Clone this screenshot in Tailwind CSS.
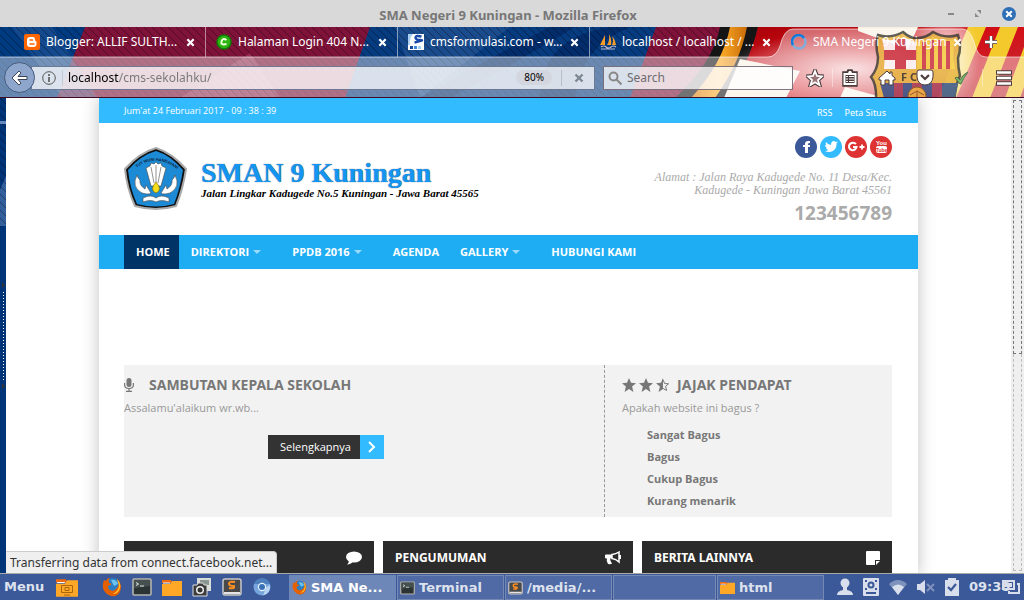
<!DOCTYPE html>
<html lang="id">
<head>
    <meta charset="UTF-8">
    <meta name="viewport" content="width=device-width, initial-scale=1.0">
    <title>SMA Negeri 9 Kuningan - Mozilla Firefox</title>
    <script src="https://cdn.jsdelivr.net/npm/@tailwindcss/browser@4"></script>
</head>
<body class="flex h-screen flex-col overflow-hidden bg-[#003478] font-['Noto_Sans',sans-serif]">

    <!-- Shared icons -->
    <svg class="hidden">
        <symbol id="x" viewBox="0 0 10 10"><path d="M1.5 1.5l7 7m0-7l-7 7" fill="none" stroke="currentColor" stroke-width="2.4"/></symbol>
        <symbol id="firefox" viewBox="0 0 20 20">
            <circle cx="10.5" cy="9" r="8" fill="#2c7ec4"/>
            <path d="M9 3q5-1 7 4l-4 2z" fill="#6ec3ee"/>
            <path d="M2 3q-3 8 1 12 4 5 10 4 6-2 6-10-1-5-4-7 3 6 0 9-3 4-7 2-2-1-2-4l3-1q1-2-2-2-1-3 1-5-3 0-4 3z" fill="#e66000"/>
            <path d="M15 2q4 4 3 9-2 6-7 6 6-3 6-9z" fill="#ffcb2d"/>
        </symbol>
        <symbol id="terminal" viewBox="0 0 20 18">
            <rect x="1" y="1" width="18" height="16" rx="1" fill="#2c3333" stroke="#b4b4ad" stroke-width="1.600"/>
            <path d="M2 2h16v6L2 10z" fill="#465050"/>
            <path d="M4 4.500l2.500 1.500L4 7.500M8 8h4" fill="none" stroke="#dfe8df"/>
        </symbol>
        <symbol id="folder" viewBox="0 0 20 17">
            <path d="M0 1h9l1 3H0z" fill="#ee6a10"/>
            <path d="M0 5h8l2-3h10v15H0z" fill="#ffa726"/>
            <path d="M1 4h7" stroke="#fff" stroke-width="1"/>
        </symbol>
        <symbol id="sublime" viewBox="0 0 20 18">
            <rect x="1" y="1" width="18" height="16" rx="2" fill="#494949" stroke="#c9c9c9" stroke-width="1.5"/>
            <path d="M2 14h16v2H2z" fill="#e5e5e5"/>
            <path d="M13 4q-6-1-6 1.500t5 2.500q1 3-5 2" fill="none" stroke="#ff9022" stroke-width="2"/>
        </symbol>
        <symbol id="star" viewBox="0 0 14 14"><path d="M7 0l2 4.800 5 .4-3.900 3.300L11.400 14 7 11l-4.400 3 1.300-5.500L0 5.200l5-.4z" fill="currentColor"/></symbol>
    </svg>

    <!-- Window title -->
    <header class="flex h-[27px] shrink-0 items-center bg-[#d9d9d9] pr-2">
        <div class="w-20"></div>
        <h1 class="flex-1 pt-1 text-center text-[13px] font-bold text-[#777]">SMA Negeri 9 Kuningan - Mozilla Firefox</h1>
        <div class="flex w-20 items-center justify-end gap-5 text-[#888]">
            <button aria-label="Minimize" class="h-[2px] w-[6px] bg-[#888]"></button>
            <button aria-label="Maximize"><svg class="h-2 w-2" viewBox="0 0 8 8"><path d="M3 0h4v4zM1 3v4h4z" fill="#888"/></svg></button>
            <button aria-label="Close" class="flex h-[14px] w-[14px] items-center justify-center rounded-full bg-[#2f6fb5] text-white"><svg class="h-2 w-2"><use href="#x"/></svg></button>
        </div>
    </header>

    <!-- Tabs and toolbar on the FCB theme -->
    <section class="relative h-[71px] shrink-0 overflow-hidden">
        <svg class="absolute inset-0 h-full w-full" viewBox="0 0 1024 71" preserveAspectRatio="xMaxYMin slice">
            <defs>
                <pattern id="hatch" width="8" height="8" patternUnits="userSpaceOnUse"><path d="M-1-1l10 10" stroke="#000" stroke-opacity=".35"/></pattern>
                <linearGradient id="red" x2="1" y2="1"><stop offset="0" stop-color="#a80008"/><stop offset=".5" stop-color="#d30f18"/><stop offset="1" stop-color="#c2343a"/></linearGradient>
                <linearGradient id="gold" x2="1"><stop offset="0" stop-color="#d77a10"/><stop offset=".5" stop-color="#ffae2a"/><stop offset="1" stop-color="#c96c08"/></linearGradient>
                <radialGradient id="glow"><stop offset="0" stop-color="#fff" stop-opacity=".8"/><stop offset="1" stop-color="#fff" stop-opacity="0"/></radialGradient>
            </defs>
            <path d="M0 0h1024v71H0z" fill="#7f1238"/>
            <path d="M0 0h85L57 71H0z" fill="#003a80"/>
            <path d="M12 0h40l45 71H62z" fill="#33639f" opacity=".4"/>
            <path d="M370 0h286l-26 71H345z" fill="#063b80"/>
            <path d="M395 0h115l-90 71z" fill="#4a70a8" opacity=".3"/>
            <path d="M420 71Q490 30 550 0h25Q500 45 450 71zM540 71q0-60 70-71h20q-50 20-55 71z" fill="#001d55" opacity=".5"/>
            <path d="M180 71l70-45 30 45z" fill="#c06080" opacity=".35"/>
            <path d="M0 0h730v71H0z" fill="url(#hatch)"/>
            <path d="M720 0h38q-8 36-34 71h-49q38-35 45-71z" fill="#151515"/>
            <path d="M730 0h17q-7 36-32 71h-24q32-35 39-71z" fill="url(#gold)"/>
            <path d="M758 0h266v71H724q26-35 34-71z" fill="url(#red)"/>
            <path d="M740 32l60 12-14 27h-62zM858 0h60l-10 22-50-18zM845 60l40 11h-45z" fill="#f8efe0"/>
            <path d="M968 0h18l-30 71h-18zM1000 0h18l-28 71h-18zM1024 20v40l-4 11h-15z" fill="#f4c92c"/>
            <ellipse cx="850" cy="42" rx="125" ry="38" fill="url(#glow)"/>
            <ellipse cx="945" cy="30" rx="35" ry="50" fill="url(#glow)"/>
            <!-- Light toolbar with the selected tab rising out of it -->
            <path d="M0 30H768Q776 30 780 19 784 2 793 2H962Q970 2 974 15 977 30 986 30H1024V71H0z" fill="#fff" fill-opacity=".4"/>
            <path d="M0 30H768Q776 30 780 19 784 2 793 2H962Q970 2 974 15 977 30 986 30H1024" fill="none" stroke="#fff" stroke-opacity=".6"/>
            <!-- Club crest -->
            <g opacity=".8">
                <path d="M878 8q12 4 25-3 8 7 14 6 9 0 16-6 12 7 25 3 4 12 0 23 0 10 2 18-4 6-6 26h-78q1-18-5-25 7-8 7-20-3-12 0-22z" fill="#e8b339" stroke="#38372e" stroke-width="2.500"/>
                <path d="M882 12q12 3 22-2 6 4 12 5v27h-32q2-18-2-30z" fill="#fff"/>
                <path d="M917 15q10 0 16-5 12 5 22 2-3 16 0 30h-38z" fill="#f6cf37"/>
                <path d="M895 12h11v30h-11zM884 23h32v10h-32zM922 15h4v27h-4zM930 13h4v29h-4zM938 13h4v29h-4zM946 14h4v28h-4z" fill="#c92f3d"/>
                <path d="M880 56h78l-3 15h-71z" fill="#294b85"/>
                <path d="M894 56h9v15h-9zM912 56h10v15h-10zM932 56h10v15h-10z" fill="#a33350"/>
                <circle cx="917" cy="69" r="9" fill="#edaa34" stroke="#7c5110"/>
                <path d="M910 68l7-4 7 4M917 64v7" fill="none" stroke="#7c5110"/>
                <text x="901" y="54" font-family="Noto Sans" font-size="11" font-weight="700" fill="#2e2a1c">F C B</text>
            </g>
            <path d="M0 70.500h1024" stroke="#400a22"/>
        </svg>
        <div class="relative flex h-[30px] pl-4 text-xs text-white [text-shadow:1px_1px_1px_#000]">
            <div class="flex min-w-0 flex-1 items-center border-r border-white/50 bg-clip-padding pr-[10px] pl-2">
                <svg class="h-4 w-4 shrink-0" viewBox="0 0 16 16"><rect width="16" height="16" rx="2" fill="#ff6600"/><path d="M6 3h3q2 0 2 3 0 1 1.500 1.500V10q0 3-3 3H6q-3 0-3-3V6q0-3 3-3z" fill="#fff"/><path d="M6 6h2.500M6 10h4" stroke="#ff6600" stroke-width="1.500" stroke-linecap="round"/></svg>
                <button class="ml-[6px] flex-1 truncate text-left">Blogger: ALLIF SULTH...</button>
                <button aria-label="Close tab"><svg class="h-[9px] w-[9px]"><use href="#x"/></svg></button>
            </div>
            <div class="flex min-w-0 flex-1 items-center border-r border-white/50 pr-[10px] pl-[10px]">
                <svg class="h-4 w-4 shrink-0" viewBox="0 0 16 16"><circle cx="8" cy="8" r="7" fill="#2eb514" stroke="#117a05" stroke-width="1.500"/><path d="M10.500 6q-4-2.500-5 1.500T10.500 10" fill="none" stroke="#e9ffd8" stroke-width="2"/></svg>
                <button class="ml-[6px] flex-1 truncate text-left">Halaman Login 404 N...</button>
                <button aria-label="Close tab"><svg class="h-[9px] w-[9px]"><use href="#x"/></svg></button>
            </div>
            <div class="flex min-w-0 flex-1 items-center border-r border-white/50 pr-[10px] pl-[10px]">
                <svg class="h-4 w-4 shrink-0" viewBox="0 0 16 16"><path d="M0 0h16v16H0z" fill="#fff"/><path d="M0 0h5Q1 5 2 11H0z" fill="#aacdf2"/><path d="M13.500 2.500q-6-1.500-6 1t5 2.500-6 2.500" fill="none" stroke="#1949a8" stroke-width="2.400"/><path d="M2 12h3v3H2z" fill="#1a489f"/><path d="M6 12h3v3H6z" fill="#3e8be0"/><path d="M10 12h3v3h-3z" fill="#a2d1fa"/></svg>
                <button class="ml-[6px] flex-1 truncate text-left">cmsformulasi.com - w...</button>
                <button aria-label="Close tab"><svg class="h-[9px] w-[9px]"><use href="#x"/></svg></button>
            </div>
            <div class="flex min-w-0 flex-1 items-center pr-[10px] pl-[10px]">
                <svg class="h-4 w-4 shrink-0" viewBox="0 0 16 16"><path d="M5 1L0 11h5zM9 0q1 7-2 11h4q1-6-2-11zM12 2q2 5 0 9h4q-1-6-4-9z" fill="#f89c27"/><path d="M1 13q3-2 5 0t5 0 5 0M1 15h14" fill="none" stroke="#b9b5c8" stroke-width="1.200"/></svg>
                <button class="ml-[6px] flex-1 truncate text-left">localhost / localhost / ...</button>
                <button aria-label="Close tab"><svg class="h-[9px] w-[9px]"><use href="#x"/></svg></button>
            </div>
            <div class="flex min-w-0 flex-1 items-center pr-[10px] pl-[10px]">
                <svg class="h-4 w-4 shrink-0" viewBox="0 0 16 16" fill="none" stroke-width="2.400"><circle cx="8" cy="8" r="6.500" stroke="#7faddc"/><path d="M2 11A6.500 6.500 0 0 1 13 4" stroke="#1279d8"/></svg>
                <button class="ml-[6px] flex-1 truncate text-left">SMA Negeri 9 Kuningan</button>
                <button aria-label="Close tab"><svg class="h-[9px] w-[9px]"><use href="#x"/></svg></button>
            </div>
            <button aria-label="New tab" class="flex w-[52px] items-center pl-3"><svg class="h-[14px] w-[14px]" viewBox="0 0 14 14"><path d="M7 1v12M1 7h12" stroke="#4b3030" stroke-width="4"/><path d="M7 1v12M1 7h12" stroke="#fff" stroke-width="2.400"/></svg></button>
        </div>
        <div class="relative flex h-[41px] items-center pr-[11px] pl-1">
            <button aria-label="Back" class="z-10 flex h-[31px] w-[31px] shrink-0 items-center justify-center rounded-full border border-[#465a7e] bg-[#8ea6cb]">
                <svg class="h-4 w-[17px]" viewBox="0 0 17 16"><path d="M8 1L1 8l7 7 2-2-3-3.500h9v-3H7L10 3z" fill="#fff" stroke="#3b4453" stroke-linejoin="round"/></svg>
            </button>
            <div class="-ml-1 flex h-6 flex-1 items-center border border-[#4f5f80]/80 bg-white/75 pr-[10px] pl-[10px]">
                <svg class="h-[14px] w-[14px] shrink-0" viewBox="0 0 14 14" fill="none" stroke="#555"><circle cx="7" cy="7" r="6.300"/><path d="M7 6v5M7 3v2" stroke-width="1.600"/></svg>
                <span class="ml-[6px] h-4 w-px bg-black/10"></span>
                <input aria-label="Address" value="localhost/cms-sekolahku/" class="ml-[5px] h-5 min-w-0 flex-1 bg-[linear-gradient(90deg,#000_51px,#777_51px)] bg-clip-text text-xs text-transparent outline-none">
                <button class="h-[15px] rounded-full bg-[#d3d6df] px-2 text-[10px] leading-[15px]">80%</button>
                <span class="ml-[9px] h-4 w-px bg-black/15"></span>
                <button aria-label="Stop" class="ml-3 text-[#7d8794]"><svg class="h-[10px] w-[10px]"><use href="#x"/></svg></button>
            </div>
            <label class="ml-2 flex h-6 w-[190px] items-center border border-[#5f5462]/80 bg-white/75 pl-1">
                <svg class="h-[14px] w-[14px]" viewBox="0 0 14 14" fill="none" stroke="#888" stroke-width="2"><circle cx="5.500" cy="5.500" r="4"/><path d="M8.500 8.500l5 5"/></svg>
                <input aria-label="Search" placeholder="Search" class="ml-[5px] w-36 text-xs outline-none placeholder:text-[#6c6c70]">
            </label>
            <div class="ml-[13px] flex w-[207px] items-center justify-between">
                <button aria-label="Bookmark"><svg class="h-[18px] w-[18px]" viewBox="0 0 18 18"><path d="M9 2l2 5 5 .4-4 3.600 1.400 5L9 13.200 4.600 16 6 11 2 7.400 7 7z" fill="none" stroke="#4d3c3c" stroke-width="4"/><path d="M9 2l2 5 5 .4-4 3.600 1.400 5L9 13.200 4.600 16 6 11 2 7.400 7 7z" fill="#9b7478" stroke="#fff" stroke-width="1.800"/></svg></button>
                <span class="h-[18px] w-px bg-white/40"></span>
                <button aria-label="Bookmarks list"><svg class="h-[18px] w-4" viewBox="0 0 16 18"><path d="M1 3h4l1-2h4l1 2h4v14H1z" fill="#4d3c3c" stroke="#4d3c3c" stroke-width="1.500"/><path d="M1.500 4H6l1-2h2l1 2h4.500v12h-13z" fill="#fff"/><path d="M3.500 6h9v8h-9z" fill="#4d3c3c"/><path d="M4 7.500h2m1 0h5M4 10h2m1 0h5m-8 2.500h2m1 0h5" stroke="#fff"/></svg></button>
                <button aria-label="Home" class="ml-3"><svg class="h-4 w-[18px]" viewBox="0 0 18 16"><path d="M9 1L1 8v2h2v5h4v-5h4v5h4v-5h2V8l-3-2.500V2h-2v2z" fill="#fff" stroke="#4d3c3c"/></svg></button>
                <button aria-label="Pocket" class="ml-3"><svg class="h-[17px] w-[18px]" viewBox="0 0 18 17"><path d="M1 3q0-2 2-2h12q2 0 2 2v5q-1 8-8 8T1 8z" fill="#fff" stroke="#4d3c3c"/><path d="M5 6l4 4 4-4" fill="none" stroke="#4d3c3c" stroke-width="2.200"/></svg></button>
                <button aria-label="Checked" class="ml-3"><svg class="h-[14px] w-[15px]" viewBox="0 0 15 14"><path d="M1 7l2-1 3 3q3-6 8-8-4 5-7 12H6z" fill="#75b56c" stroke="#55714e"/></svg></button>
                <span class="ml-1 h-[18px] w-px bg-white/40"></span>
                <button aria-label="Menu" class="ml-1"><svg class="h-4 w-[18px]" viewBox="0 0 18 16"><path d="M1 2.500h16M1 8h16M1 13.500h16" stroke="#4d3c3c" stroke-width="4.400"/><path d="M2 2.500h14M2 8h14M2 13.500h14" stroke="#fff" stroke-width="2.600"/></svg></button>
            </div>
        </div>
    </section>

    <main class="relative flex min-h-0 flex-1 overflow-hidden">
        <!-- Collapsed sidebar edge -->
        <div class="flex w-[6px] shrink-0 flex-col items-end">
            <svg class="h-full w-[6px]" viewBox="0 0 6 475" preserveAspectRatio="xMinYMin slice"><path d="M0 0h6v475H0z" fill="#003478"/><path d="M0 92l6-14v50H0z" fill="#33609c"/><path d="M0 0h6v129H0z" fill="url(#hatch)"/><path d="M0 23h6v3H0z" fill="#6689bb"/><path d="M2 184l3 3-3 3zM2 285l3 3-3 3z" fill="#333"/><path d="M3.500 194v90" stroke="#fff" stroke-dasharray="1 2"/></svg>
        </div>

        <!-- Web page -->
        <div class="min-w-0 flex-1 overflow-hidden bg-white font-['Open_Sans','Noto_Sans',sans-serif]">
            <div class="mx-auto min-h-full max-w-[819px] bg-white shadow-[0_0_16px_rgba(0,0,0,0.25)]">
                <div class="flex h-[25px] items-center justify-between bg-[#33bbff] pr-8 pl-[25px] text-[9px] text-white">
                    <span>Jum'at 24 Februari 2017 - 09 : 38 : 39</span>
                    <nav class="flex gap-3 pt-1 font-['Noto_Sans',sans-serif]"><a href="#">RSS</a><a href="#">Peta Situs</a></nav>
                </div>
                <div class="flex h-28 justify-between pr-[26px] pl-[25px]">
                    <a href="#" class="flex items-center gap-[14px]">
                        <svg class="h-16 w-[63px]" viewBox="0 0 63 64">
                            <path d="M32 1Q48 6 62 22 59 42 52 59 32 65 11 59 3 42 1 22 15 6 32 1z" fill="#111" stroke="#aaa" stroke-width="2"/>
                            <path d="M32 4Q46 8 59 23 56 42 50 57 32 62 13 57 6 42 4 23 17 8 32 4z" fill="#1d8ad6"/>
                            <path id="motto" d="M8 25Q31 2 58 26" fill="none"/>
                            <text font-family="Liberation Sans" font-size="4" font-weight="700" fill="#0b1c33"><textPath href="#motto" startOffset="50%" text-anchor="middle">TUT WURI HANDAYANI</textPath></text>
                            <g fill="#fff" stroke="#444" stroke-width=".6">
                                <path d="M22 21l4-2 1-3 3 1 2-2 2 2 3-1 1 3 4 2-5 18h-10z"/>
                                <path d="M13 28q-6 12 5 18 7 2 9 0l-5-8-1 4q-6-4-5-9-2-1-3-5zM51 28q6 12-5 18-7 2-9 0l5-8 1 4q6-4 5-9 2-1 3-5z"/>
                                <path d="M19 51q8-4 13 0 5-4 13 0v4q-8-3-13 0-5-3-13 0z"/>
                            </g>
                            <path d="M27 20l3 16M32 18v17M37 20l-3 16" stroke="#777" stroke-width=".8"/>
                            <path d="M32 35q7 8 0 11-7-3 0-11z" fill="#f7dc19" stroke="#776100" stroke-width=".6"/>
                        </svg>
                        <span class="font-['Liberation_Serif',serif]">
                            <strong class="block text-[28px] leading-7 text-[#1595f2] [text-shadow:0_0_1px_#345]">SMAN 9 Kuningan</strong>
                            <strong class="block text-[11px] leading-3 text-black italic">Jalan Lingkar Kadugede No.5 Kuningan - Jawa Barat 45565</strong>
                        </span>
                    </a>
                    <div class="flex flex-col items-end pt-[13px] text-right text-[#aaa]">
                        <div class="flex gap-[3px]">
                            <a href="#" aria-label="Facebook"><svg class="h-[22px] w-[22px]" viewBox="0 0 22 22"><circle cx="11" cy="11" r="11" fill="#3b5998"/><path d="M15 5h-2q-3 0-3 3v1H8v2h2v6h3v-6h2V9h-2V8q0-1 2-1z" fill="#fff"/></svg></a>
                            <a href="#" aria-label="Twitter"><svg class="h-[22px] w-[22px]" viewBox="0 0 22 22"><circle cx="11" cy="11" r="11" fill="#33bbff"/><path d="M6 6q2 3 5 3 0-4 3-4l2 1 2-.5-1.500 2Q17 13 12 15.500q-4 1-7-.5 2 0 3.500-1-2-.5-2.500-2h1Q5 11 5 9l1.500.5Q5 8 6 6z" fill="#fff"/></svg></a>
                            <a href="#" aria-label="Google Plus"><svg class="h-[22px] w-[22px]" viewBox="0 0 22 22"><circle cx="11" cy="11" r="11" fill="#dd3333"/><path d="M11 8Q9 6 6.500 7 4 8 4 10.500T6.500 14q4 1 5-3H8" fill="none" stroke="#fff" stroke-width="2"/><path d="M17 8.500v5M14.500 11h5" stroke="#fff" stroke-width="1.800"/></svg></a>
                            <a href="#" aria-label="YouTube"><svg class="h-[22px] w-[22px]" viewBox="0 0 22 22"><circle cx="11" cy="11" r="11" fill="#dd3333"/><rect x="6" y="10" width="11" height="7" rx="2" fill="#fff"/><text x="11.500" y="9" text-anchor="middle" font-family="Liberation Sans Narrow,Liberation Sans" font-size="6" font-weight="700" fill="#fff">You</text><text x="11.500" y="16" text-anchor="middle" font-family="Liberation Sans Narrow,Liberation Sans" font-size="5" font-weight="700" fill="#dd3333">Tube</text></svg></a>
                        </div>
                        <address class="mt-[13px] font-[Georgia,'Liberation_Serif',serif] text-xs leading-[13px]">Alamat : Jalan Raya Kadugede No. 11 Desa/Kec.<br>Kadugede - Kuningan Jawa Barat 45561</address>
                        <strong class="mt-1 text-[19px] leading-6">123456789</strong>
                    </div>
                </div>
                <nav class="flex h-[34px] bg-[#1eadf3] pl-[25px] text-[11px] leading-[34px] font-bold text-white">
                    <a href="#" class="bg-[#003366] pr-[9px] pl-3">HOME</a>
                    <a href="#" class="flex items-center gap-1 pr-[19px] pl-3">DIREKTORI <svg class="h-1 w-2" viewBox="0 0 8 4"><path d="M0 0h8L4 4z" fill="#99d9fb"/></svg></a>
                    <a href="#" class="flex items-center gap-1 pr-[19px] pl-3">PPDB 2016 <svg class="h-1 w-2" viewBox="0 0 8 4"><path d="M0 0h8L4 4z" fill="#99d9fb"/></svg></a>
                    <a href="#" class="pr-[9px] pl-3">AGENDA</a>
                    <a href="#" class="flex items-center gap-1 pr-[19px] pl-3">GALLERY <svg class="h-1 w-2" viewBox="0 0 8 4"><path d="M0 0h8L4 4z" fill="#99d9fb"/></svg></a>
                    <a href="#" class="pr-[9px] pl-3">HUBUNGI KAMI</a>
                </nav>

                <div class="pt-24 pr-[26px] pl-[25px]">
                    <div class="flex h-[152px] bg-[#f2f2f2] text-[#777]">
                        <section class="flex-1 pt-[10px]">
                            <h2 class="flex items-center font-['Noto_Sans',sans-serif] text-sm leading-5 font-bold">
                                <svg class="mr-[15px] h-[14px] w-[10px]" viewBox="0 0 10 14"><rect x="2.500" width="5" height="9" rx="2.500" fill="currentColor"/><path d="M.6 5v2q0 3.500 4.400 3.500T9.400 7V5M5 10v3M2 13.400h6" fill="none" stroke="currentColor" stroke-width="1.200"/></svg>
                                SAMBUTAN KEPALA SEKOLAH
                            </h2>
                            <p class="mt-1 text-[11px] leading-[18px] text-[#999]">Assalamu'alaikum wr.wb...</p>
                            <a href="#" class="mt-[18px] ml-36 inline-flex h-6 items-center bg-[#333] pl-3 text-[11px] text-white">Selengkapnya
                                <span class="ml-[9px] flex h-6 w-6 items-center justify-center bg-[#33bbff]"><svg class="h-3 w-2" viewBox="0 0 8 12"><path d="M1 1l5 5-5 5" fill="none" stroke="#fff" stroke-width="2"/></svg></span>
                            </a>
                        </section>
                        <section class="w-[288px] border-l border-dashed border-[#999] pt-[10px] pl-[17px]">
                            <h2 class="flex items-center gap-[3px] font-['Noto_Sans',sans-serif] text-sm leading-5 font-bold">
                                <svg class="h-[14px] w-[14px]"><use href="#star"/></svg>
                                <svg class="h-[14px] w-[14px]"><use href="#star"/></svg>
                                <svg class="mr-1 h-[14px] w-[14px]" viewBox="0 0 14 14"><path d="M7 0v11l-4.400 3 1.300-5.500L0 5.200l5-.4z" fill="currentColor"/><path d="M7 1.500l1.600 4 4 .3-3 2.500 1 4.200L7 10.400" fill="none" stroke="currentColor"/></svg>
                                JAJAK PENDAPAT
                            </h2>
                            <p class="mt-1 text-[11px] leading-[18px] text-[#999]">Apakah website ini bagus ?</p>
                            <ul class="mt-[7px] ml-[25px] text-[11px] leading-[22px] font-bold">
                                <li>Sangat Bagus</li>
                                <li>Bagus</li>
                                <li>Cukup Bagus</li>
                                <li>Kurang menarik</li>
                            </ul>
                        </section>
                    </div>
                    <div class="mt-6 grid grid-cols-3 gap-[9px] font-['Noto_Sans',sans-serif] text-xs font-bold text-white">
                        <h3 class="flex h-[34px] items-center justify-end bg-[#2b2b2b] px-3">
                            <svg class="h-[14px] w-4" viewBox="0 0 16 14"><ellipse cx="8" cy="6" rx="8" ry="5.500" fill="#fff"/><path d="M3 9q0 3-2 4.500 4 0 6-3z" fill="#fff"/></svg>
                        </h3>
                        <h3 class="flex h-[34px] items-center justify-between bg-[#2b2b2b] px-3">PENGUMUMAN
                            <svg class="h-[14px] w-4" viewBox="0 0 16 14" fill="#fff"><path d="M0 4.500q0-1 1-1h6v4H1q-1 0-1-1zM2 7h3q0 3 2 5.500-1 1-4 .5Q1 10 2 7z"/><path d="M7 3.500Q11 3 14 1v10Q11 8 7 7.500z" fill="none" stroke="#fff" stroke-width="1.500"/><path d="M14 4h2v4h-2z"/></svg>
                        </h3>
                        <h3 class="flex h-[34px] items-center justify-between bg-[#2b2b2b] px-3">BERITA LAINNYA
                            <svg class="h-[14px] w-[14px]" viewBox="0 0 14 14" fill="#fff"><path d="M0 1q0-1 1-1h12q1 0 1 1v8H9v5H1q-1 0-1-1z"/><path d="M10 10h4l-4 4z"/></svg>
                        </h3>
                    </div>
                </div>
            </div>
        </div>

        <!-- Scrollbar -->
        <div class="flex w-[13px] shrink-0 flex-col bg-[#efefef] px-[2px] py-[2px]">
            <div class="flex-[254] border border-dashed border-[#777]"></div>
            <div class="flex-[217] border border-t-0 border-dashed border-[#bbb]"></div>
        </div>

        <div class="absolute bottom-0 left-[6px] h-[22px] rounded-tr border border-b-0 border-l-0 border-[#ccc] bg-[#efefef] px-1 text-xs leading-[22px] text-[#333]">Transferring data from connect.facebook.net...</div>
    </main>

    <!-- Desktop panel -->
    <footer class="flex h-[27px] shrink-0 items-center border-t border-[#aaa] bg-[#3b5998] pl-1 font-['DejaVu_Sans',sans-serif] text-[13px] font-bold text-[#dde2ee]">
        <button class="w-[52px] text-left">Menu</button>
        <button aria-label="Show files" class="relative mr-6"><svg class="h-[19px] w-[22px]"><use href="#folder"/></svg><svg class="absolute top-[6px] left-[5px] h-3 w-3" viewBox="0 0 12 12" fill="none" stroke="#a8660f"><path d="M.5 1.500h11v7H.5zM3 11h6M4 3.500h4v3H4z"/></svg></button>
        <div class="flex items-center gap-[10px]">
            <button aria-label="Firefox" class="flex"><svg class="h-5 w-5"><use href="#firefox"/></svg></button>
            <button aria-label="Terminal" class="flex"><svg class="h-[18px] w-5"><use href="#terminal"/></svg></button>
            <button aria-label="Files" class="flex"><svg class="h-[17px] w-5"><use href="#folder"/></svg></button>
            <button aria-label="Screenshot" class="flex"><svg class="h-5 w-5" viewBox="0 0 20 20"><path d="M5 1h14v13H5z" fill="#d9ddd9"/><path d="M8 3h9v5H8z" fill="#889591"/><path d="M1 8h4l1-2h5l1 2h3v11H1z" fill="#3b3b3b" stroke="#ddd"/><circle cx="8" cy="13" r="4" fill="#eee"/><circle cx="8" cy="13" r="2.500" fill="#333"/></svg></button>
            <button aria-label="Sublime Text" class="flex"><svg class="h-[18px] w-5"><use href="#sublime"/></svg></button>
            <button aria-label="Chromium" class="flex"><svg class="h-5 w-5" viewBox="0 0 20 20"><circle cx="10" cy="10" r="8.500" fill="#75a5dc"/><path d="M2 7q3-6 9-5.500 5 .5 7 5.500h-8z" fill="#4c7fbe"/><path d="M18 8q1 8-7 10.500l3-8z" fill="#b9d5f3"/><circle cx="10" cy="10" r="4.200" fill="#e9f2fc"/><circle cx="10" cy="10" r="3" fill="#3971b5"/></svg></button>
        </div>
        <div class="ml-[17px] flex h-full min-w-0 flex-1 gap-px pt-px">
            <button class="flex min-w-0 flex-1 items-center gap-1 bg-[#6c87b8] px-[3px] text-white"><svg class="h-[15px] w-[15px] shrink-0"><use href="#firefox"/></svg><span class="whitespace-nowrap">SMA Ne...</span></button>
            <button class="flex min-w-0 flex-1 items-center gap-1 border border-[#7689b3] bg-[#4f6aa5] px-[2px]"><svg class="h-[14px] w-[15px] shrink-0"><use href="#terminal"/></svg>Terminal</button>
            <button class="flex min-w-0 flex-1 items-center gap-1 border border-[#7689b3] bg-[#4f6aa5] px-[2px]"><svg class="h-[14px] w-[15px] shrink-0"><use href="#sublime"/></svg>/media/...</button>
            <button aria-label="Window" class="min-w-0 flex-1 border border-[#7689b3] bg-[#4f6aa5]"></button>
            <button class="flex min-w-0 flex-1 items-center gap-1 border border-[#7689b3] bg-[#4f6aa5] px-[2px]"><svg class="h-[15px] w-[15px] shrink-0"><use href="#folder"/></svg>html</button>
        </div>
        <div class="ml-[13px] flex items-center gap-[10px] text-[#d8deeb]">
            <svg class="h-[18px] w-4" viewBox="0 0 16 18" fill="currentColor"><circle cx="8" cy="5" r="4.500"/><path d="M6 9h4v3q6 1 6 5H0q0-4 6-5z"/></svg>
            <svg class="h-[18px] w-4" viewBox="0 0 16 18"><rect width="16" height="18" rx="1" fill="currentColor"/><circle cx="8" cy="7" r="2.500" fill="none" stroke="#3b5998" stroke-width="2"/><path d="M2 2h2v2H2zM12 2h2v2h-2zM2 10h2v2H2zM12 10h2v2h-2zM3 14h10v2H3z" fill="#3b5998"/></svg>
            <svg class="h-4 w-[18px]" viewBox="0 0 18 16"><path d="M0 5q9-8 18 0L9 16z" fill="#7f92bd"/><path d="M3 8q6-5 12 0l-6 8z" fill="currentColor"/></svg>
            <svg class="h-[14px] w-[18px]" viewBox="0 0 18 14"><path d="M0 4h3l5-4v14l-5-4H0z" fill="currentColor"/><path d="M10 4l7 7m0-7l-7 7" stroke="#7f92bd" stroke-width="2"/></svg>
            <svg class="h-[18px] w-[14px]" viewBox="0 0 14 18"><path d="M0 2h3V0h8v2h3v16H0z" fill="currentColor"/><path d="M3 9l3 3 5-6" fill="none" stroke="#3b5998" stroke-width="2.200"/></svg>
        </div>
        <div class="relative ml-[10px] w-[55px]">
            <time>09:38</time>
            <svg class="absolute top-[3px] right-1 h-[14px] w-[18px]" viewBox="0 0 18 14" fill="none" stroke="#d8deeb" stroke-width="2"><path d="M1 1h11v8H1zM15 4h2v9H7v-2M4 4h5v2H4z"/></svg>
        </div>
    </footer>
</body>
</html>
